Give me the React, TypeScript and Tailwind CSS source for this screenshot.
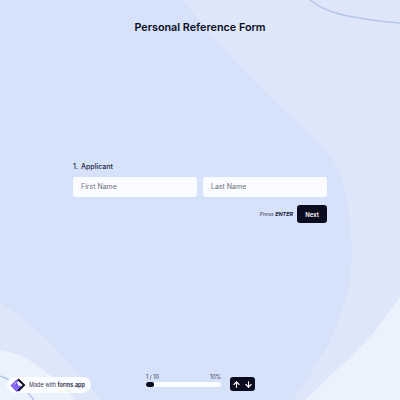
import React from "react";
import { ArrowUp, ArrowDown } from "lucide-react";

function Background() {
  return (
    <svg className="absolute inset-0 w-[400px] h-[400px]" viewBox="0 0 400 400" aria-hidden="true">
      <rect width="400" height="400" fill="#d6e1fa" />
      <path d="M183 0 C205 30 235 62 273 100 C295 120 318 140 333 160 C345 180 350 205 352 250 C352 275 348 295 343 307 C335 332 327 348 317 363 C308 378 300 390 293 400 L400 400 L400 0 Z" fill="#dee7fa" />
      <path d="M400 297 C390 310 380 326 367 340 C355 352 345 363 333 373 C323 382 314 392 305 400 L400 400 Z" fill="#ebf2fd" />
      <path d="M0 303 C12 310 22 318 33 327 C43 335 52 345 60 353 C68 362 76 371 83 380 C89 387 95 393 100 400 L0 400 Z" fill="#dee7fa" />
      <path d="M0 350 C7 351 14 353 20 355 C29 359 36 365 43 370 C49 374 55 379 60 383 C65 388 70 394 75 400 L0 400 Z" fill="#ebf2fd" />
      <path d="M0 376 C10 379 21 387 28 393 C30 395 32 398 34 400" fill="none" stroke="#b5c6ea" strokeWidth="1.5" />
      <path d="M310 0 C316 5 324 9 333 12 C344 16 352 17 360 18 C374 21 387 22 400 23" fill="none" stroke="#b5c6ea" strokeWidth="1.5" />
    </svg>
  );
}

function Logo() {
  return (
    <svg className="shrink-0" width="16" height="15" viewBox="0 0 16 15" aria-hidden="true">
      <path d="M0.5 7.5 L6.5 1.5 L8.5 3.2 L7.2 4.6 L5.5 4.6 L3.5 7.5 L6.5 10.8 L10 7.5 L11.6 9.2 L6.8 14 Z" fill="#7c5cf0" />
      <path d="M3.5 7.5 L6.5 4.4 L8 6 L8 7.5 L10 7.5 L6.6 10.8 Z" fill="#7c5cf0" />
      <path d="M8.6 0.6 L15.4 7 L9 13.6 L7.6 12.2 L12.6 7 L7.2 2 Z" fill="#0d0c22" />
    </svg>
  );
}

export default function App() {
  return (
    <div className="relative w-[400px] h-[400px] overflow-hidden font-['Inter',sans-serif] text-[#0b0c1f]">
      <Background />
      <div className="relative h-full flex flex-col items-center">
        <h1 className="mt-[20px] text-[10.8px] leading-[16px] font-semibold">Personal Reference Form</h1>
        <main className="w-[254px] mt-[124px] flex flex-col">
          <label className="text-[7px] leading-[12px] font-medium mb-[5px] text-[#20233a] translate-y-[1px]">
            <span className="mr-[3px]">1.</span>Applicant
          </label>
          <div className="flex gap-[6px]">
            <div className="flex-1 h-[20px] rounded-[3px] bg-[#fbfcff] flex items-center px-[8px] text-[7px] text-[#6b6f7e]">First Name</div>
            <div className="flex-1 h-[20px] rounded-[3px] bg-[#fbfcff] flex items-center px-[8px] text-[7px] text-[#6b6f7e]">Last Name</div>
          </div>
          <div className="flex justify-end items-center mt-[8px]">
            <span className="text-[5.4px] italic text-[#4a4e63] mr-[4px]">Press <b className="font-bold text-[#20233a]">ENTER</b></span>
            <button className="w-[30px] h-[18px] rounded-[3px] bg-[#0b0c1f] text-white text-[6px] font-semibold flex items-center justify-center">Next</button>
          </div>
        </main>
        <footer className="mt-auto mb-[9px] ml-[1px] flex items-end">
          <div className="w-[75px] flex flex-col mb-[4px]">
            <div className="flex justify-between text-[5.5px] leading-[7px] text-[#3c4056]">
              <span>1 / 10</span>
              <span>10%</span>
            </div>
            <div className="mt-[1px] h-[5px] rounded-[2px] bg-[#fbfcff] overflow-hidden">
              <div className="h-full w-[8px] rounded-[2px] bg-[#0b0c1f]" />
            </div>
          </div>
          <div className="ml-[9px] w-[25px] h-[14px] rounded-[3px] bg-[#0b0c1f] text-white flex items-center justify-center gap-[3px]">
            <ArrowUp size={9} strokeWidth={3} />
            <ArrowDown size={9} strokeWidth={3} />
          </div>
        </footer>
      </div>
      <div className="absolute left-[7px] top-[377px] w-[84px] h-[16px] rounded-full bg-[#fbfcff] flex items-center pl-[3px] gap-[3px]">
        <Logo />
        <span className="text-[5.5px] text-[#3c4056] whitespace-nowrap">Made with <b className="font-semibold text-[#20233a]">forms.app</b></span>
      </div>
    </div>
  );
}
